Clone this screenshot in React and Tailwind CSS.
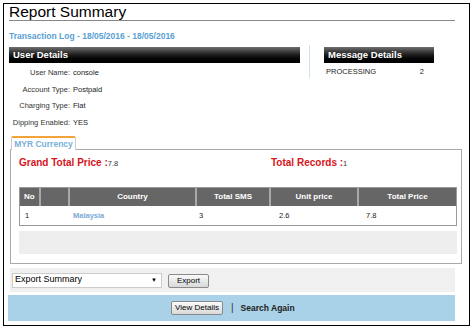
import React from 'react';

const rows = [
  ['User Name:', 'console'],
  ['Account Type:', 'Postpaid'],
  ['Charging Type:', 'Flat'],
  ['Dipping Enabled:', 'YES'],
];

const cols = [
  { label: 'No', w: 'w-[19px]' },
  { label: '', w: 'w-[29px]' },
  { label: 'Country', w: 'w-[127px]' },
  { label: 'Total SMS', w: 'w-[74px]' },
  { label: 'Unit price', w: 'w-[88px]' },
  { label: 'Total Price', w: 'flex-1' },
];

const BarHeader = ({ children, className = '' }) => (
  <div className={`h-[16px] flex items-center px-[4px] text-white font-bold text-[9.5px] bg-gradient-to-b from-[#707070] via-[#1c1c1c] to-black ${className}`}>
    {children}
  </div>
);

const GrayButton = ({ children, className = '' }) => (
  <button className={`h-[14px] border border-[#8a8a8a] rounded-[2px] bg-gradient-to-b from-[#fafafa] to-[#d9d9d9] text-[8px] text-black leading-none ${className}`}>
    {children}
  </button>
);

export default function App() {
  return (
    <div className="w-[474px] h-[330px] bg-white pl-[3px] pt-[3px] font-['Liberation_Sans',Arial,sans-serif] text-[#222] whitespace-nowrap">
      <div className="w-[467px] h-[323px] border border-black flex flex-col overflow-hidden">
        {/* Title */}
        <div className="ml-[5px] w-[446px] text-[15.5px] leading-[15px] text-black border-b border-[#888] pb-[1px]">Report Summary</div>
        <div className="ml-[5px] mt-[10px] text-[8.5px] font-bold text-[#5a9fd4] leading-[11px]">Transaction Log - 18/05/2016 - 18/05/2016</div>

        {/* Details */}
        <div className="flex mt-[5px] ml-[5px]">
          <div className="w-[291px]">
            <BarHeader>User Details</BarHeader>
            <div className="flex flex-col pt-[2px] text-[7.5px]">
              {rows.map(([k, v]) => (
                <div key={k} className="flex leading-[16.5px]">
                  <span className="w-[61px] text-right text-[#333]">{k}</span>
                  <span className="ml-[3px] text-[#222]">{v}</span>
                </div>
              ))}
            </div>
          </div>
          <div className="w-px h-[33px] bg-[#cfe2f1] ml-[9px] -mt-[2px]" />
          <div className="ml-[14px] w-[110px]">
            <BarHeader>Message Details</BarHeader>
            <div className="flex justify-between pl-[2px] pr-[10px] pt-[3px] text-[7.5px] leading-[12px]">
              <span>PROCESSING</span>
              <span>2</span>
            </div>
          </div>
        </div>

        {/* Tab + panel */}
        <div className="mt-[5px] ml-[6px]">
          <div className="ml-[1px] w-[65px] h-[14px] border border-b-0 border-[#cccccc] border-t-2 border-t-[#f2a33a] bg-white text-[8.5px] font-bold text-[#7ab0d8] flex items-center justify-center leading-none relative z-10 -mb-px rounded-t-[2px]">MYR Currency</div>
          <div className="w-[452px] h-[115px] border border-[#aaaaaa] pl-[8px] pt-[6px]">
            <div className="flex items-baseline text-[#d8131b] font-bold text-[10px] leading-[14px]">
              <div className="w-[252px]">Grand Total Price :<span className="text-[7.5px] font-normal text-[#333]">7.8</span></div>
              <div>Total Records :<span className="text-[7.5px] font-normal text-[#333]">1</span></div>
            </div>
            <div className="mt-[16px] border border-[#999] w-[438px]">
              <div className="flex h-[18px] bg-[#666666] text-white font-bold text-[8px]">
                {cols.map((c, i) => (
                  <div key={i} className={`${c.w} flex items-center ${i === 0 ? 'pl-[4px]' : 'justify-center border-l-2 border-[#a8a8a8]'}`}>{c.label}</div>
                ))}
              </div>
              <div className="flex h-[19px] items-center text-[7.5px] bg-white">
                <div className="w-[19px] pl-[5px]">1</div>
                <div className="w-[29px]" />
                <div className="w-[127px] text-[#7aaad6] font-bold pl-[5px]">Malaysia</div>
                <div className="w-[74px] pl-[4px]">3</div>
                <div className="w-[88px] pl-[10px]">2.6</div>
                <div className="flex-1 pl-[9px]">7.8</div>
              </div>
            </div>
            <div className="mt-[5px] h-[23px] bg-[#eeeeee] w-[438px]" />
          </div>
        </div>

        {/* Export */}
        <div className="mt-[4px] ml-[6px] w-[445px] h-[24px] bg-[#f0f0f0] flex items-center">
          <div className="ml-[2px] w-[150px] h-[15px] bg-white border border-[#cccccc] flex items-center justify-between pl-[2px] pr-[4px] text-[9px] text-black">
            <span>Export Summary</span>
            <span className="text-[6px]">▼</span>
          </div>
          <GrayButton className="ml-[6px] w-[41px] mt-[2px]">Export</GrayButton>
        </div>

        {/* Bottom bar */}
        <div className="mt-[3px] ml-[4px] w-[447px] h-[26px] bg-[#a9d1e7] flex items-center">
          <GrayButton className="ml-[163px] w-[52px]">View Details</GrayButton>
          <span className="ml-[8px] text-[#333] text-[10px] leading-none">|</span>
          <span className="ml-[7px] font-bold text-[8.5px] text-[#222]">Search Again</span>
        </div>
      </div>
    </div>
  );
}
